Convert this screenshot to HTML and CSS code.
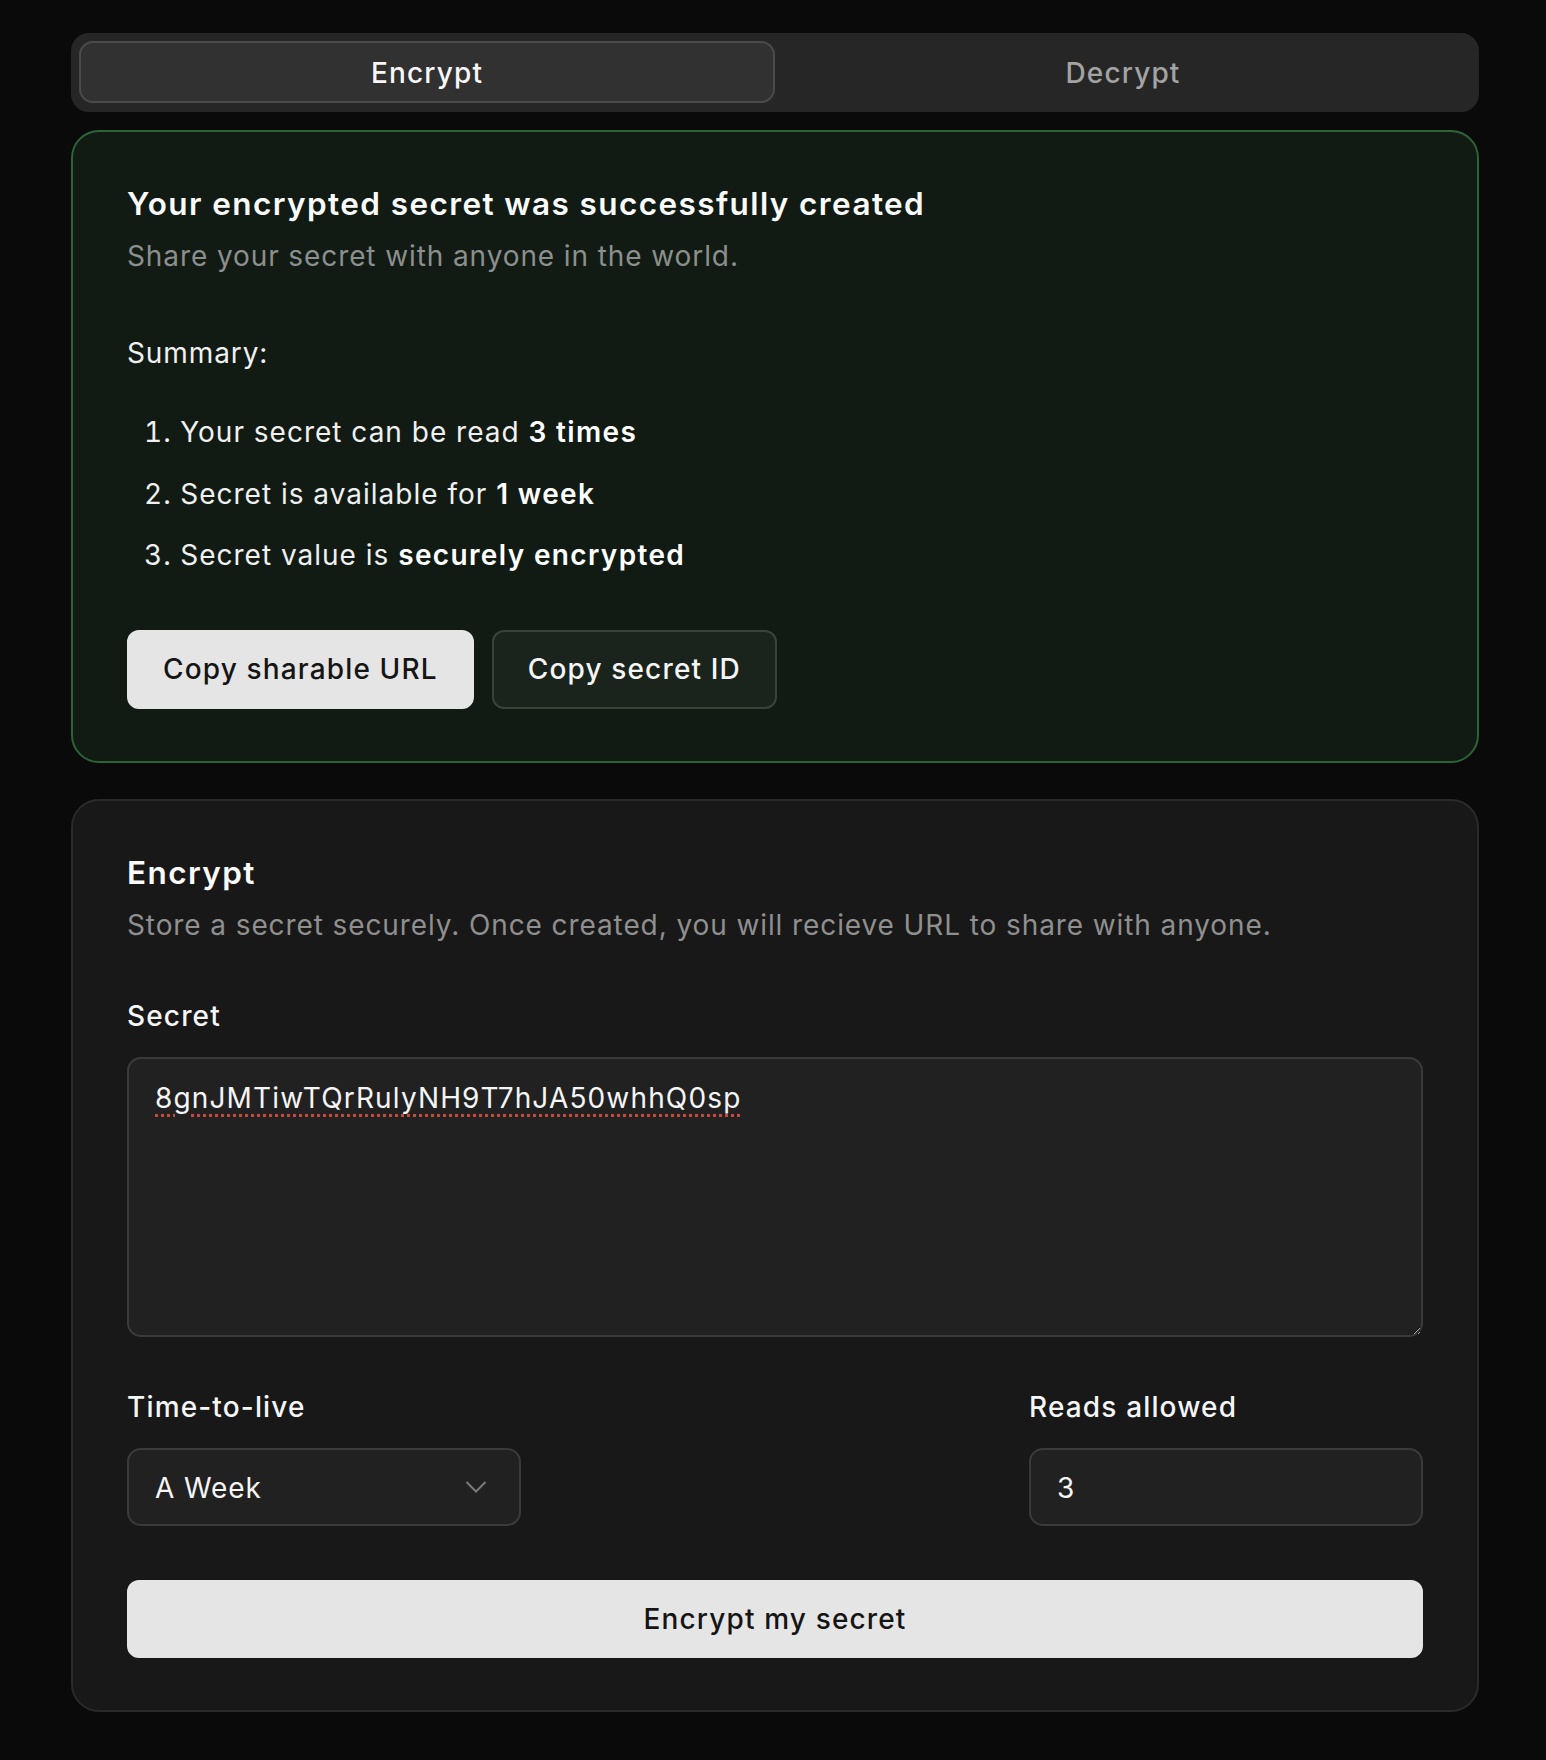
FILE: index.html
```html
<!DOCTYPE html>
<html lang="en">
<head>
<meta charset="utf-8">
<title>Encrypt secret</title>
<link rel="stylesheet" href="styles.css">
</head>
<body>
<main class="page">
  <div class="tabs">
    <button class="tab tab-active">Encrypt</button>
    <button class="tab">Decrypt</button>
  </div>

  <section class="card card-success">
    <h2 class="card-title">Your encrypted secret was successfully created</h2>
    <p class="card-desc">Share your secret with anyone in the world.</p>
    <p class="summary">Summary:</p>
    <ol class="summary-list">
      <li>Your secret can be read <strong>3 times</strong></li>
      <li>Secret is available for <strong>1 week</strong></li>
      <li>Secret value is <strong>securely encrypted</strong></li>
    </ol>
    <div class="actions">
      <button class="btn btn-light">Copy sharable URL</button>
      <button class="btn btn-outline">Copy secret ID</button>
    </div>
  </section>

  <section class="card card-form">
    <h2 class="card-title">Encrypt</h2>
    <p class="card-desc">Store a secret securely. Once created, you will recieve URL to share with anyone.</p>
    <label class="label label-secret">Secret</label>
    <textarea class="textarea" spellcheck="false">8gnJMTiwTQrRulyNH9T7hJA50whhQ0sp</textarea>
    <div class="row">
      <div class="field">
        <label class="label">Time-to-live</label>
        <div class="select">
          <span>A Week</span>
          <svg class="chevron" width="22" height="14" viewBox="0 0 22 14"><polyline points="1.5,2 11,11.5 20.5,2" fill="none" stroke="#7a7a7a" stroke-width="2"/></svg>
        </div>
      </div>
      <div class="field">
        <label class="label">Reads allowed</label>
        <div class="input">3</div>
      </div>
    </div>
    <button class="btn btn-light btn-block">Encrypt my secret</button>
  </section>
</main>
</body>
</html>
```

FILE: styles.css
```css
* { box-sizing: border-box; }
html, body { margin: 0; padding: 0; }
body {
  background: #0a0a0a;
  color: #f5f5f5;
  font-family: Inter, "Noto Sans", sans-serif;
  font-size: 28px;
  line-height: 42px;
  letter-spacing: 0.9px;
}
.page {
  width: 1408px;
  margin: 0 0 0 71px;
  padding-top: 33px;
  padding-bottom: 48px;
}
.tabs {
  display: grid;
  grid-template-columns: 1fr 1fr;
  height: 79px;
  padding: 8px;
  background: #262626;
  border-radius: 18px;
}
.tab {
  font-family: inherit;
  font-size: 28px;
  font-weight: 500;
  letter-spacing: 1.15px;
  color: #a3a3a3;
  background: transparent;
  border: 2px solid transparent;
  border-radius: 14px;
  padding: 3px 0 0;
  height: 62px;
  margin-top: -0.5px;
}
.tab-active {
  background: #313131;
  border-color: #4a4a4a;
  color: #f7f7f7;
}
.card {
  border-radius: 28px;
  border: 2px solid #2a2a2a;
  padding: 54px 54px 52px;
}
.card-success {
  margin-top: 18px;
  background: #111b14;
  border-color: #2e6337;
}
.card-form {
  margin-top: 36px;
  background: #181818;
}
.card-title {
  margin: 0;
  font-size: 31.5px;
  line-height: 35px;
  font-weight: 600;
  color: #fafafa;
  letter-spacing: 1.4px;
}
.card-desc {
  margin: 14px 0 0;
  color: #8c8f8d;
}
.card-form .card-desc { color: #8f8f8f; }
.summary {
  margin: 55px 0 0;
  color: #f0f0f0;
}
.summary-list {
  list-style: decimal inside;
  margin: 37px 0 0;
  padding: 0 0 0 17px;
  color: #f0f0f0;
  letter-spacing: 1px;
}
.summary-list li { margin-top: 19.5px; }
.summary-list li:first-child { margin-top: 0; }
.summary-list strong { font-weight: 600; color: #fff; letter-spacing: 1.35px; }
.actions {
  display: flex;
  gap: 18px;
  margin-top: 54px;
}
.btn {
  font-family: inherit;
  font-size: 28px;
  font-weight: 500;
  letter-spacing: 1.15px;
  height: 78.5px;
  padding: 0 34px;
  border-radius: 12px;
  border: 2px solid transparent;
  cursor: pointer;
}
.btn-light {
  background: #e5e5e5;
  color: #151515;
  border-color: #e5e5e5;
}
.btn-outline {
  background: #1a241d;
  color: #f5f5f5;
  border-color: #36443a;
}
.btn-block {
  display: block;
  width: 100%;
  margin-top: 54px;
}
.label {
  display: block;
  font-weight: 500;
  letter-spacing: 1.15px;
  color: #f5f5f5;
}
.label-secret { margin-top: 49px; }
.textarea {
  display: block;
  width: 100%;
  height: 280px;
  margin-top: 20px;
  padding: 18px 26px;
  background: #212121;
  border: 2px solid #3a3a3a;
  border-radius: 14px;
  color: #f5f5f5;
  font-family: inherit;
  font-size: 28px;
  line-height: 42px;
  letter-spacing: 1.15px;
  resize: vertical;
  text-decoration: underline dotted #c8483c;
  text-decoration-thickness: 3px;
  text-underline-offset: 6px;
  outline: none;
}
.row {
  display: flex;
  justify-content: space-between;
  margin-top: 49px;
}
.field { width: 394px; }
.select, .input {
  display: flex;
  align-items: center;
  justify-content: space-between;
  height: 78px;
  margin-top: 20px;
  padding: 3px 32px 0 26px;
  background: #212121;
  border: 2px solid #3a3a3a;
  border-radius: 14px;
  color: #f5f5f5;
}
.chevron { display: block; margin-top: -3px; }
```
